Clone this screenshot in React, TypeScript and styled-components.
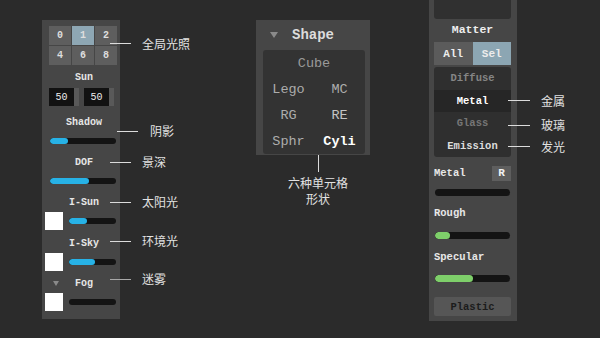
import styled, { createGlobalStyle } from "styled-components";

// #region ##################################################################################### GLOBAL
const Global = createGlobalStyle`
  html, body {
    margin: 0;
    padding: 0;
    background: #2b2b2b;
  }
  body {
    width: 600px;
    height: 338px;
    overflow: hidden;
    font-family: "Liberation Mono", "DejaVu Sans Mono", monospace;
  }
`;
// #endregion

// #region ##################################################################################### SHARED
const Stage = styled.div`
  width: 600px;
  height: 338px;
  display: flex;
  align-items: flex-start;
  background: #2b2b2b;
`;

const Panel = styled.div<{ $left: number; $top: number; $width: number }>`
  position: relative;
  display: flex;
  flex-direction: column;
  box-sizing: border-box;
  margin-left: ${(p) => p.$left}px;
  margin-top: ${(p) => p.$top}px;
  width: ${(p) => p.$width}px;
  background: #464646;
`;

const Callout = styled.span<{ $from: number; $len: number; $gap: number; $dy?: number; $dim?: boolean }>`
  position: absolute;
  left: calc(100% + ${(p) => p.$from}px);
  top: calc(50% + ${(p) => p.$dy ?? 0}px);
  transform: translateY(-50%);
  display: flex;
  align-items: center;
  gap: ${(p) => p.$gap}px;
  white-space: nowrap;
  font-family: "Noto Sans CJK SC", "Noto Sans", sans-serif;
  font-size: 12px;
  font-weight: 400;
  line-height: 16px;
  color: #e2e2e2;

  &::before {
    content: "";
    width: ${(p) => p.$len}px;
    height: 1px;
    background: ${(p) => (p.$dim ? "#a8a8a8" : "#dcdcdc")};
  }
`;

const Caret = styled.span<{ $w: number; $h: number }>`
  flex: none;
  width: 0;
  height: 0;
  border-left: ${(p) => p.$w / 2}px solid transparent;
  border-right: ${(p) => p.$w / 2}px solid transparent;
  border-top: ${(p) => p.$h}px solid #8a8a8a;
`;

const Track = styled.div<{ $mt: number; $ml?: number; $mr?: number; $h?: number }>`
  flex: 1;
  height: ${(p) => p.$h ?? 6}px;
  margin: ${(p) => p.$mt}px ${(p) => p.$mr ?? 0}px 0 ${(p) => p.$ml ?? 0}px;
  border-radius: 4px;
  background: #141414;
  overflow: hidden;
`;

const Fill = styled.div<{ $color: string }>`
  height: 100%;
  border-radius: 4px;
  background: ${(p) => p.$color};
`;

const Slider = (props: { value: number; color: string; mt: number; ml?: number; mr?: number; h?: number }) => (
  <Track $mt={props.mt} $ml={props.ml} $mr={props.mr} $h={props.h}>
    {props.value > 0 && <Fill $color={props.color} style={{ width: `${props.value * 100}%` }} />}
  </Track>
);
// #endregion

// #region ##################################################################################### LEFT PANEL
const GridWrap = styled.div`
  position: relative;
  padding: 6px 0 0 7px;
`;

const PresetGrid = styled.div`
  display: grid;
  grid-template-columns: repeat(3, 22px);
  grid-auto-rows: 19px;
  gap: 1px;
`;

const PresetCell = styled.div<{ $on?: boolean }>`
  display: flex;
  align-items: center;
  justify-content: center;
  background: ${(p) => (p.$on ? "#8ea7b4" : "#5e5e5e")};
  color: #dedede;
  font-size: 10px;
  font-weight: 700;
`;

const Label = styled.div<{ $mt: number }>`
  position: relative;
  display: flex;
  align-items: center;
  justify-content: center;
  height: 14px;
  margin-top: ${(p) => p.$mt}px;
  padding-left: 6px;
  color: #e6e6e6;
  font-size: 10px;
  font-weight: 700;
`;

const FoldLabel = styled(Label)`
  justify-content: flex-start;
  padding-left: 11px;

  > b {
    margin-left: 16px;
  }
`;

const NumRow = styled.div`
  display: flex;
  gap: 5px;
  margin: 4px 0 0 7px;
`;

const NumBox = styled.div`
  display: flex;
  width: 30px;
  height: 18px;
`;

const NumValue = styled.div`
  flex: 1;
  display: flex;
  align-items: center;
  justify-content: center;
  background: #121212;
  color: #ececec;
  font-size: 10px;
`;

const NumSpin = styled.div`
  width: 5px;
  background: #595959;
`;

const SliderBox = styled.div`
  display: flex;
  margin: 0 4px 0 8px;
`;

const SwatchRow = styled.div<{ $mt: number }>`
  display: flex;
  align-items: center;
  gap: 6px;
  margin: ${(p) => p.$mt}px 4px 0 3px;
`;

const Swatch = styled.div`
  flex: none;
  width: 18px;
  height: 18px;
  background: #ffffff;
`;

const LeftPanel = () => (
  <Panel $left={42} $top={20} $width={78} style={{ paddingBottom: 8 }}>
    <GridWrap>
      <PresetGrid>
        {["0", "1", "2", "4", "6", "8"].map((n) => (
          <PresetCell key={n} $on={n === "1"}>
            {n}
          </PresetCell>
        ))}
      </PresetGrid>
      <Callout $from={-10} $len={21} $gap={11} $dy={1}>
        全局光照
      </Callout>
    </GridWrap>

    <Label $mt={5}>Sun</Label>
    <NumRow>
      <NumBox>
        <NumValue>50</NumValue>
        <NumSpin />
      </NumBox>
      <NumBox>
        <NumValue>50</NumValue>
        <NumSpin />
      </NumBox>
    </NumRow>

    <Label $mt={9}>
      Shadow
      <Callout $from={-3} $len={21} $gap={12} $dy={9}>
        阴影
      </Callout>
    </Label>
    <SliderBox>
      <Slider value={0.28} color="#27b2e6" mt={9} />
    </SliderBox>

    <Label $mt={11}>
      DOF
      <Callout $from={-10} $len={21} $gap={11}>
        景深
      </Callout>
    </Label>
    <SliderBox>
      <Slider value={0.59} color="#27b2e6" mt={9} />
    </SliderBox>

    <Label $mt={11}>
      I-Sun
      <Callout $from={-10} $len={21} $gap={11}>
        太阳光
      </Callout>
    </Label>
    <SwatchRow $mt={3}>
      <Swatch />
      <Slider value={0.38} color="#27b2e6" mt={0} />
    </SwatchRow>

    <Label $mt={6}>
      I-Sky
      <Callout $from={-10} $len={21} $gap={11} $dy={-2}>
        环境光
      </Callout>
    </Label>
    <SwatchRow $mt={3}>
      <Swatch />
      <Slider value={0.55} color="#27b2e6" mt={0} />
    </SwatchRow>

    <FoldLabel $mt={5}>
      <Caret $w={6} $h={5} />
      <b>Fog</b>
      <Callout $from={-10} $len={21} $gap={11} $dy={-4} $dim>
        迷雾
      </Callout>
    </FoldLabel>
    <SwatchRow $mt={3}>
      <Swatch />
      <Slider value={0} color="#27b2e6" mt={0} />
    </SwatchRow>
  </Panel>
);
// #endregion

// #region ##################################################################################### SHAPE PANEL
const ShapeHeader = styled.div`
  display: flex;
  align-items: center;
  height: 30px;
  padding-left: 14px;
  color: #dcdcdc;
  font-size: 14px;
  font-weight: 700;

  > b {
    margin-left: 14px;
  }
`;

const ShapeBox = styled.div`
  display: grid;
  grid-template-columns: 1fr 1fr;
  grid-auto-rows: 26px;
  margin: 0 5px 1px 7px;
  border-radius: 3px;
  background: #333333;
`;

const ShapeItem = styled.div<{ $wide?: boolean; $tone: string; $bold?: boolean }>`
  grid-column: ${(p) => (p.$wide ? "span 2" : "auto")};
  display: flex;
  align-items: center;
  justify-content: center;
  color: ${(p) => p.$tone};
  font-size: 13.5px;
  font-weight: ${(p) => (p.$bold ? 700 : 400)};
`;

const DropNote = styled.div`
  position: absolute;
  top: 100%;
  left: 62px;
  transform: translateX(-50%);
  display: flex;
  flex-direction: column;
  align-items: center;
  font-family: "Noto Sans CJK SC", "Noto Sans", sans-serif;
  font-size: 12px;
  line-height: 16px;
  color: #e2e2e2;
  white-space: nowrap;

  &::before {
    content: "";
    width: 1px;
    height: 17px;
    margin-bottom: 3px;
    background: #dcdcdc;
  }
`;

const ShapePanel = () => (
  <Panel $left={136} $top={20} $width={114}>
    <ShapeHeader>
      <Caret $w={9} $h={6} />
      <b>Shape</b>
    </ShapeHeader>
    <ShapeBox>
      <ShapeItem $wide $tone="#9a9a9a">
        Cube
      </ShapeItem>
      <ShapeItem $tone="#adadad">Lego</ShapeItem>
      <ShapeItem $tone="#adadad">MC</ShapeItem>
      <ShapeItem $tone="#adadad">RG</ShapeItem>
      <ShapeItem $tone="#c4c4c4">RE</ShapeItem>
      <ShapeItem $tone="#adadad">Sphr</ShapeItem>
      <ShapeItem $tone="#ffffff" $bold>
        Cyli
      </ShapeItem>
    </ShapeBox>
    <DropNote>
      <span>六种单元格</span>
      <span>形状</span>
    </DropNote>
  </Panel>
);
// #endregion

// #region ##################################################################################### MATTER PANEL
const TopStub = styled.div`
  height: 19px;
  border-radius: 0 0 3px 3px;
  background: #303030;
`;

const Heading = styled.div`
  height: 16px;
  margin-top: 3px;
  line-height: 16px;
  text-align: center;
  color: #eeeeee;
  font-size: 11.5px;
  font-weight: 700;
`;

const Toggle = styled.div`
  display: grid;
  grid-template-columns: 1fr 1fr;
  height: 23px;
  margin-top: 4px;
`;

const ToggleOpt = styled.div<{ $on?: boolean }>`
  display: flex;
  align-items: center;
  justify-content: center;
  background: ${(p) => (p.$on ? "#8ca6b3" : "#5b5b5b")};
  color: #ececec;
  font-size: 11px;
  font-weight: 700;
`;

const MatList = styled.div`
  display: flex;
  flex-direction: column;
  margin-top: 2px;
  border-radius: 3px;
  background: #2f2f2f;
`;

const MatItem = styled.div<{ $tone: string; $active?: boolean }>`
  position: relative;
  display: flex;
  align-items: center;
  justify-content: center;
  height: 22.5px;
  background: ${(p) => (p.$active ? "#262626" : "transparent")};
  color: ${(p) => p.$tone};
  font-size: 10.5px;
  font-weight: 700;
`;

const PropRow = styled.div<{ $mt: number }>`
  display: flex;
  align-items: center;
  justify-content: space-between;
  height: 16px;
  margin-top: ${(p) => p.$mt}px;
  color: #e8e8e8;
  font-size: 10.5px;
  font-weight: 700;
`;

const ResetBtn = styled.div`
  display: flex;
  align-items: center;
  justify-content: center;
  width: 19px;
  height: 15px;
  background: #5e5e5e;
  color: #f2f2f2;
  font-size: 11px;
  font-weight: 700;
`;

const SliderLine = styled.div`
  display: flex;
  margin: 0 1px;
`;

const PresetBtn = styled.div`
  display: flex;
  align-items: center;
  justify-content: center;
  height: 19px;
  margin-top: 15px;
  border-radius: 2px;
  background: #565656;
  color: #1c1c1c;
  font-size: 10.5px;
  font-weight: 700;
`;

const MatterPanel = () => (
  <Panel $left={59} $top={0} $width={88} style={{ padding: "0 6px 5px 5px" }}>
    <TopStub />
    <Heading>Matter</Heading>
    <Toggle>
      <ToggleOpt>All</ToggleOpt>
      <ToggleOpt $on>Sel</ToggleOpt>
    </Toggle>
    <MatList>
      <MatItem $tone="#858585">Diffuse</MatItem>
      <MatItem $tone="#ffffff" $active>
        Metal
        <Callout $from={-3} $len={22} $gap={11}>
          金属
        </Callout>
      </MatItem>
      <MatItem $tone="#767676">
        Glass
        <Callout $from={-3} $len={22} $gap={11} $dy={2}>
          玻璃
        </Callout>
      </MatItem>
      <MatItem $tone="#dddddd">
        Emission
        <Callout $from={-3} $len={22} $gap={11} $dy={1}>
          发光
        </Callout>
      </MatItem>
    </MatList>

    <PropRow $mt={8}>
      Metal
      <ResetBtn>R</ResetBtn>
    </PropRow>
    <SliderLine>
      <Slider value={0} color="#7ecf6a" mt={8} h={7} />
    </SliderLine>

    <PropRow $mt={9}>Rough</PropRow>
    <SliderLine>
      <Slider value={0.2} color="#7ecf6a" mt={11} h={7} />
    </SliderLine>

    <PropRow $mt={10}>Specular</PropRow>
    <SliderLine>
      <Slider value={0.5} color="#7ecf6a" mt={10} h={7} />
    </SliderLine>

    <PresetBtn>Plastic</PresetBtn>
  </Panel>
);
// #endregion

// #region ##################################################################################### APP
const App = () => (
  <>
    <Global />
    <Stage>
      <LeftPanel />
      <ShapePanel />
      <MatterPanel />
    </Stage>
  </>
);

export default App;
// #endregion
